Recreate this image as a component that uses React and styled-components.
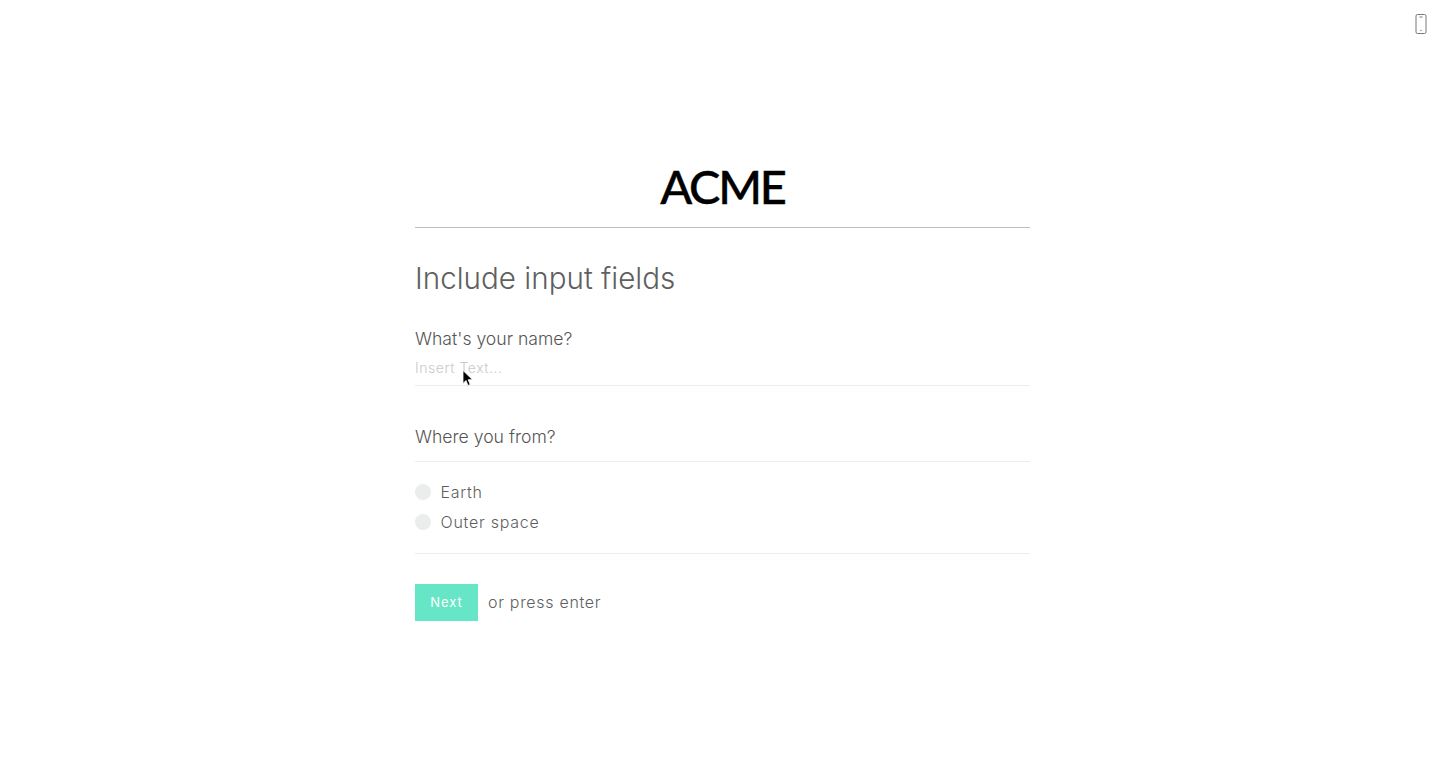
import styled, { createGlobalStyle } from "styled-components";

const GlobalStyle = createGlobalStyle`
  html, body {
    margin: 0;
    padding: 0;
    background: #fff;
    font-family: Inter, "Liberation Sans", sans-serif;
    color: #5f5f5f;
  }
`

const Page = styled.div`
  position: relative;
  height: 766px;
  overflow: hidden;
  display: flex;
  justify-content: center;
  padding-left: 2px;
  box-sizing: border-box;
`

const DeviceButton = styled.div`
  position: absolute;
  top: 14px;
  right: 16px;
  width: 12px;
  height: 20px;
  color: #777;
`

const Form = styled.form`
  width: 615px;
  padding-top: 161px;
`

const Header = styled.header`
  height: 66px;
  border-bottom: 1px solid #bdbdbd;
  display: flex;
  justify-content: center;
`

const Logo = styled.span`
  font-family: Lato, sans-serif;
  font-weight: 500;
  font-size: 47px;
  line-height: 50px;
  letter-spacing: -2.2px;
  -webkit-text-stroke: 0.4px #000;
  color: #000;
`

const Title = styled.h1`
  margin: 32px 0 0;
  font-size: 29.6px;
  line-height: 36px;
  font-weight: 300;
  color: #5f5f5f;
`

const Question = styled.label`
  display: block;
  font-size: 17.6px;
  line-height: 24px;
  font-weight: 300;
  color: #555;
  margin-top: ${p => p.$top}px;
`

const TextInput = styled.input`
  display: block;
  width: 100%;
  box-sizing: border-box;
  height: 36px;
  margin-top: -1px;
  padding: 0;
  border: 0;
  border-bottom: 1px solid #ececec;
  outline: 0;
  background: transparent;
  font-family: inherit;
  font-size: 14px;
  font-weight: 300;
  letter-spacing: 0.55px;

  &::placeholder {
    color: #c9c9c9;
    opacity: 1;
  }
`

const Divider = styled.hr`
  margin: ${p => p.$top}px 0 0;
  border: 0;
  border-top: 1px solid #ececec;
`

const Options = styled.div`
  display: flex;
  flex-direction: column;
  gap: 6px;
  padding-top: 18px;
  padding-bottom: 19px;
  border-bottom: 1px solid #ececec;
`

const Option = styled.div`
  display: flex;
  align-items: center;
  gap: 9.5px;
  height: 24px;
  font-size: 16px;
  font-weight: 300;
  letter-spacing: 0.75px;
  color: #5f5f5f;
`

const Radio = styled.span`
  width: 16px;
  height: 16px;
  border-radius: 50%;
  background: #ebeded;
`

const Actions = styled.div`
  display: flex;
  align-items: center;
  gap: 10px;
  margin-top: 30px;
`

const NextButton = styled.button`
  width: 63px;
  height: 37px;
  padding: 0 0 2px;
  border: 0;
  background: #66e6c6;
  color: #fff;
  font-family: inherit;
  font-size: 13px;
  font-weight: 400;
  letter-spacing: 1px;
`

const Hint = styled.span`
  padding-bottom: 2px;
  font-size: 16px;
  font-weight: 300;
  letter-spacing: 0.7px;
  color: #5f5f5f;
`

const Cursor = styled.svg`
  position: absolute;
  left: 462px;
  top: 370px;
  width: 12px;
  height: 18px;
`

function PhoneIcon() {
  return (
    <svg width="12" height="20" viewBox="0 0 12 20" fill="none" stroke="currentColor">
      <rect x="1" y="0.5" width="10" height="19" rx="1.5" />
      <path d="M4.5 3h3" />
      <circle cx="6" cy="16.5" r="0.7" fill="currentColor" stroke="none" />
    </svg>
  )
}

export default function App() {
  return (
    <Page>
      <GlobalStyle />
      <DeviceButton><PhoneIcon /></DeviceButton>
      <Form>
        <Header><Logo>ACME</Logo></Header>
        <Title>Include input fields</Title>
        <Question $top={31}>What's your name?</Question>
        <TextInput placeholder="Insert Text..." />
        <Question $top={39}>Where you from?</Question>
        <Divider $top={12} />
        <Options>
          <Option><Radio />Earth</Option>
          <Option><Radio />Outer space</Option>
        </Options>
        <Actions>
          <NextButton type="button">Next</NextButton>
          <Hint>or press enter</Hint>
        </Actions>
      </Form>
      <Cursor viewBox="0 0 12 18">
        <path d="M1 0.5v13l3-3 2 5 2.2-1-2-4.8h4.3z" fill="#000" stroke="#fff" strokeWidth="0.8" />
      </Cursor>
    </Page>
  )
}
